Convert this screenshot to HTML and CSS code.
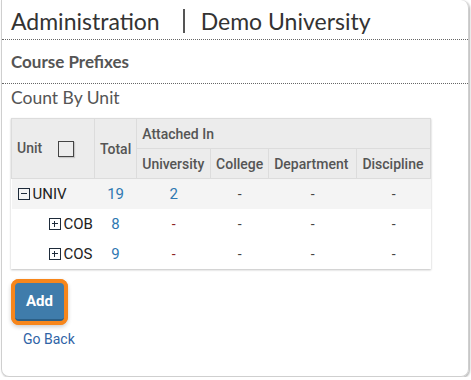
FILE: index.html
```html
<!DOCTYPE html>
<html lang="en">
  <head>
    <meta charset="UTF-8" />
    <title>Course Prefixes</title>
    <link rel="stylesheet" href="styles.css">
  </head>
  <body>
    <div class="card">
      <h1 class="title">Administration<span class="sep"></span>Demo University</h1>
      <h2 class="section">Course Prefixes</h2>
      <h3 class="subtitle">Count By Unit</h3>

      <table class="units">
        <thead>
          <tr>
            <th rowspan="2" class="col-unit">Unit <span class="check"></span></th>
            <th rowspan="2" class="col-total">Total</th>
            <th colspan="4" class="attached">Attached In</th>
          </tr>
          <tr>
            <th class="col-univ">University</th>
            <th class="col-coll">College</th>
            <th class="col-dept">Department</th>
            <th class="col-disc">Discipline</th>
          </tr>
        </thead>
        <tbody>
          <tr class="top">
            <td class="unit"><span class="toggle minus"></span>UNIV</td>
            <td class="num">19</td>
            <td class="num">2</td>
            <td>-</td>
            <td>-</td>
            <td>-</td>
          </tr>
          <tr>
            <td class="unit child"><span class="toggle plus"></span>COB</td>
            <td class="num">8</td>
            <td class="none">-</td>
            <td>-</td>
            <td>-</td>
            <td>-</td>
          </tr>
          <tr>
            <td class="unit child"><span class="toggle plus"></span>COS</td>
            <td class="num">9</td>
            <td class="none">-</td>
            <td>-</td>
            <td>-</td>
            <td>-</td>
          </tr>
        </tbody>
      </table>

      <button class="add">Add</button>
      <a class="back" href="#">Go Back</a>
    </div>
  </body>
</html>
```

FILE: styles.css
```css
body {
  margin: 0;
  background: #ffffff;
  font-family: Roboto, "Liberation Sans", sans-serif;
  color: #333;
}
.card {
  box-sizing: border-box;
  height: 377px;
  margin: 0 2px 0 1px;
  border: 1px solid #cfcfcf;
  border-top: none;
  border-radius: 0 8px 8px 8px;
  box-shadow: 1px 1px 2px rgba(0, 0, 0, 0.3);
}
.title {
  margin: 0;
  padding: 8px 9px 5px;
  font-family: Lato, "Open Sans", sans-serif;
  font-size: 23px;
  font-weight: 400;
  line-height: 26px;
  color: #333;
  border-bottom: 1px dotted #666;
  display: flex;
  align-items: center;
}
.sep {
  display: inline-block;
  width: 2px;
  height: 24px;
  background: #555;
  margin: 0 16px 0 23px;
}
.section {
  margin: 0;
  padding: 12px 9px 11px;
  font-family: Lato, "Open Sans", sans-serif;
  font-size: 17px;
  font-weight: 700;
  line-height: 20px;
  color: #555;
  border-bottom: 1px dotted #666;
}
.subtitle {
  margin: 0;
  padding: 4px 9px 0;
  font-family: Lato, "Open Sans", sans-serif;
  font-size: 17.5px;
  font-weight: 400;
  line-height: 20px;
  color: #555;
}
.units {
  margin: 10px 0 0 9px;
  width: 420px;
  border-collapse: collapse;
  font-size: 14px;
  box-shadow: 0 1px 2px rgba(0, 0, 0, 0.25);
}
.units th {
  background: #ececec;
  border: 1px solid #dcdcdc;
  color: #555;
  font-weight: 500;
  height: 29px;
  padding: 0 5px;
  text-align: left;
  white-space: nowrap;
}
.units th.col-total {
  text-align: center;
}
.col-unit { width: 76px; }
.col-total { width: 31px; }
.col-univ { width: 63px; }
.col-coll { width: 43px; }
.col-dept { width: 78px; }
.col-disc { width: 63px; }
.check {
  display: inline-block;
  width: 14px;
  height: 14px;
  border: 1px solid #444;
  vertical-align: middle;
  margin-left: 12px;
  box-shadow: 1px 1px 1px rgba(0, 0, 0, 0.15);
}
.units td {
  height: 30px;
  padding: 0;
  text-align: center;
  color: #444;
  font-size: 14px;
}
.units tr.top td {
  background: #f4f4f4;
}
.units td.unit {
  text-align: left;
  padding-left: 6px;
  font-size: 15px;
  color: #222;
}
.units td.child {
  padding-left: 37px;
}
.units td.num {
  color: #2f78b1;
  font-size: 15px;
}
.units td.none {
  color: #8b2323;
}
.toggle {
  display: inline-block;
  position: relative;
  width: 10px;
  height: 10px;
  border: 1px solid #1e2b3a;
  margin-right: 3px;
  vertical-align: -1px;
}
.toggle::before,
.plus::after {
  content: "";
  position: absolute;
  background: #1e2b3a;
}
.toggle::before {
  left: 2px;
  right: 2px;
  top: 4px;
  height: 1px;
}
.plus::after {
  top: 2px;
  bottom: 2px;
  left: 4px;
  width: 1px;
}
.add {
  display: block;
  margin: 14px 0 0 13px;
  width: 49px;
  height: 38px;
  border: none;
  border-bottom: 2px solid #2c5f86;
  border-radius: 4px;
  background: #3f7cab;
  color: #ffffff;
  font-family: Roboto, "Liberation Sans", sans-serif;
  font-size: 15px;
  font-weight: 700;
  outline: 3px solid #f7861b;
  outline-offset: 1px;
  box-shadow: 0 0 0 4px #f7861b, 0 2px 4px 4px rgba(0, 0, 0, 0.2);
}
.back {
  display: inline-block;
  margin: 10px 0 0 21px;
  font-size: 14px;
  color: #2f63a6;
  text-decoration: none;
}
```
